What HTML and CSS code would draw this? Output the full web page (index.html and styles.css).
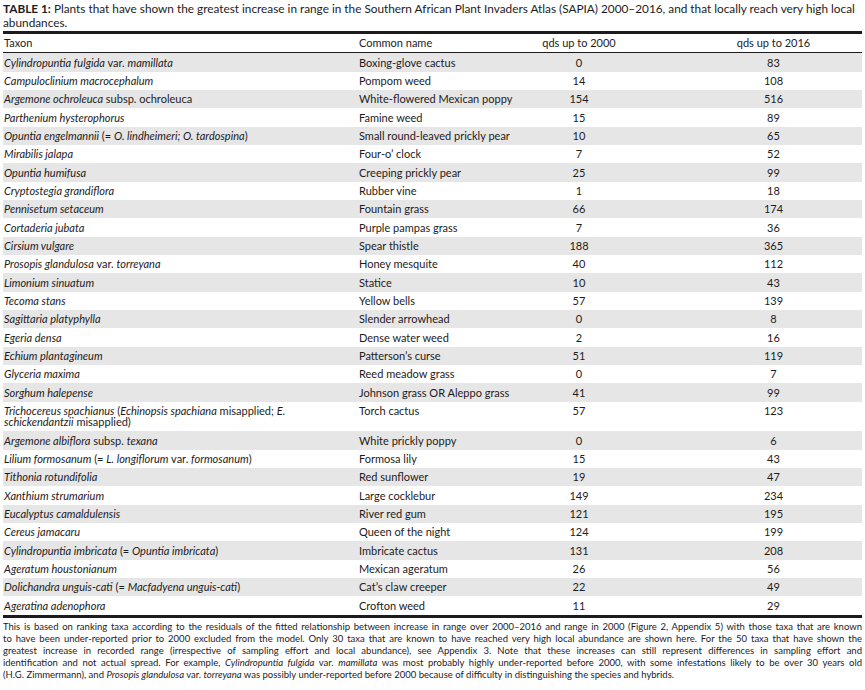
FILE: index.html
```html
<!DOCTYPE html>
<html>
<head>
<meta charset="utf-8">
<link rel="stylesheet" href="styles.css">
</head>
<body>
<div class="page">
  <div class="caption">
    <span class="cline"><b>TABLE 1:</b> Plants that have shown the greatest increase in range in the Southern African Plant Invaders Atlas (SAPIA) 2000–2016, and that locally reach very high local</span>
    <span class="cline">abundances.</span>
  </div>
  <div class="table">
    <div class="row head"><div class="c1">Taxon</div><div class="c2">Common name</div><div class="c3">qds up to 2000</div><div class="c4">qds up to 2016</div></div>
    <div class="row"><div class="c1"><i>Cylindropuntia fulgida</i> var. <i>mamillata</i></div><div class="c2">Boxing-glove cactus</div><div class="c3">0</div><div class="c4">83</div></div>
    <div class="row"><div class="c1"><i>Campuloclinium macrocephalum</i></div><div class="c2">Pompom weed</div><div class="c3">14</div><div class="c4">108</div></div>
    <div class="row"><div class="c1"><i>Argemone ochroleuca</i> subsp. ochroleuca</div><div class="c2">White-flowered Mexican poppy</div><div class="c3">154</div><div class="c4">516</div></div>
    <div class="row"><div class="c1"><i>Parthenium hysterophorus</i></div><div class="c2">Famine weed</div><div class="c3">15</div><div class="c4">89</div></div>
    <div class="row"><div class="c1"><i>Opuntia engelmannii</i> (= <i>O. lindheimeri; O. tardospina</i>)</div><div class="c2">Small round-leaved prickly pear</div><div class="c3">10</div><div class="c4">65</div></div>
    <div class="row"><div class="c1"><i>Mirabilis jalapa</i></div><div class="c2">Four-o’ clock</div><div class="c3">7</div><div class="c4">52</div></div>
    <div class="row"><div class="c1"><i>Opuntia humifusa</i></div><div class="c2">Creeping prickly pear</div><div class="c3">25</div><div class="c4">99</div></div>
    <div class="row"><div class="c1"><i>Cryptostegia grandiflora</i></div><div class="c2">Rubber vine</div><div class="c3">1</div><div class="c4">18</div></div>
    <div class="row"><div class="c1"><i>Pennisetum setaceum</i></div><div class="c2">Fountain grass</div><div class="c3">66</div><div class="c4">174</div></div>
    <div class="row"><div class="c1"><i>Cortaderia jubata</i></div><div class="c2">Purple pampas grass</div><div class="c3">7</div><div class="c4">36</div></div>
    <div class="row"><div class="c1"><i>Cirsium vulgare</i></div><div class="c2">Spear thistle</div><div class="c3">188</div><div class="c4">365</div></div>
    <div class="row"><div class="c1"><i>Prosopis glandulosa</i> var. <i>torreyana</i></div><div class="c2">Honey mesquite</div><div class="c3">40</div><div class="c4">112</div></div>
    <div class="row"><div class="c1"><i>Limonium sinuatum</i></div><div class="c2">Statice</div><div class="c3">10</div><div class="c4">43</div></div>
    <div class="row"><div class="c1"><i>Tecoma stans</i></div><div class="c2">Yellow bells</div><div class="c3">57</div><div class="c4">139</div></div>
    <div class="row"><div class="c1"><i>Sagittaria platyphylla</i></div><div class="c2">Slender arrowhead</div><div class="c3">0</div><div class="c4">8</div></div>
    <div class="row"><div class="c1"><i>Egeria densa</i></div><div class="c2">Dense water weed</div><div class="c3">2</div><div class="c4">16</div></div>
    <div class="row"><div class="c1"><i>Echium plantagineum</i></div><div class="c2">Patterson’s curse</div><div class="c3">51</div><div class="c4">119</div></div>
    <div class="row"><div class="c1"><i>Glyceria maxima</i></div><div class="c2">Reed meadow grass</div><div class="c3">0</div><div class="c4">7</div></div>
    <div class="row"><div class="c1"><i>Sorghum halepense</i></div><div class="c2">Johnson grass OR Aleppo grass</div><div class="c3">41</div><div class="c4">99</div></div>
    <div class="row"><div class="c1"><i>Trichocereus spachianus</i> (<i>Echinopsis spachiana</i> misapplied; <i>E.</i><br><i>schickendantzii</i> misapplied)</div><div class="c2">Torch cactus</div><div class="c3">57</div><div class="c4">123</div></div>
    <div class="row"><div class="c1"><i>Argemone albiflora</i> subsp. <i>texana</i></div><div class="c2">White prickly poppy</div><div class="c3">0</div><div class="c4">6</div></div>
    <div class="row"><div class="c1"><i>Lilium formosanum</i> (= <i>L. longiflorum</i> var. <i>formosanum</i>)</div><div class="c2">Formosa lily</div><div class="c3">15</div><div class="c4">43</div></div>
    <div class="row"><div class="c1"><i>Tithonia rotundifolia</i></div><div class="c2">Red sunflower</div><div class="c3">19</div><div class="c4">47</div></div>
    <div class="row"><div class="c1"><i>Xanthium strumarium</i></div><div class="c2">Large cocklebur</div><div class="c3">149</div><div class="c4">234</div></div>
    <div class="row"><div class="c1"><i>Eucalyptus camaldulensis</i></div><div class="c2">River red gum</div><div class="c3">121</div><div class="c4">195</div></div>
    <div class="row"><div class="c1"><i>Cereus jamacaru</i></div><div class="c2">Queen of the night</div><div class="c3">124</div><div class="c4">199</div></div>
    <div class="row"><div class="c1"><i>Cylindropuntia imbricata</i> (= <i>Opuntia imbricata</i>)</div><div class="c2">Imbricate cactus</div><div class="c3">131</div><div class="c4">208</div></div>
    <div class="row"><div class="c1"><i>Ageratum houstonianum</i></div><div class="c2">Mexican ageratum</div><div class="c3">26</div><div class="c4">56</div></div>
    <div class="row"><div class="c1"><i>Dolichandra unguis-cati</i> (= <i>Macfadyena unguis-cati</i>)</div><div class="c2">Cat’s claw creeper</div><div class="c3">22</div><div class="c4">49</div></div>
    <div class="row"><div class="c1"><i>Ageratina adenophora</i></div><div class="c2">Crofton weed</div><div class="c3">11</div><div class="c4">29</div></div>
  </div>
  <div class="note">
    <span class="nline">This is based on ranking taxa according to the residuals of the fitted relationship between increase in range over 2000–2016 and range in 2000 (Figure 2, Appendix 5) with those taxa that are known</span>
    <span class="nline">to have been under-reported prior to 2000 excluded from the model. Only 30 taxa that are known to have reached very high local abundance are shown here. For the 50 taxa that have shown the</span>
    <span class="nline">greatest increase in recorded range (irrespective of sampling effort and local abundance), see Appendix 3. Note that these increases can still represent differences in sampling effort and</span>
    <span class="nline">identification and not actual spread. For example, <i>Cylindropuntia fulgida</i> var. <i>mamillata</i> was most probably highly under-reported before 2000, with some infestations likely to be over 30 years old</span>
    <span class="nline last">(H.G. Zimmermann), and <i>Prosopis glandulosa</i> var. <i>torreyana</i> was possibly under-reported before 2000 because of difficulty in distinguishing the species and hybrids.</span>
  </div>
</div>
</body>
</html>
```
FILE: styles.css
```css
html, body {
  margin: 0;
  padding: 0;
  background: #ffffff;
}
body {
  font-family: "Lato", "Open Sans", sans-serif;
  color: #1e1b1c;
}
.page {
  width: 859px;
  padding: 2px 3px 0 3px;
}
.caption {
  font-size: 11.8px;
  line-height: 14px;
  padding-bottom: 1px;
}
.cline {
  display: block;
  white-space: nowrap;
}
.caption b {
  font-weight: 700;
}
.table {
  border-top: 3px solid #1e1b1c;
  border-bottom: 3px solid #1e1b1c;
  font-size: 11px;
}
.row {
  display: grid;
  grid-template-columns: 356px 132px 176px 1fr;
  line-height: 11.33px;
}
.row > div {
  padding: 3.5px 0;
  white-space: nowrap;
}
.row:nth-child(even) {
  background: #e6e6e6;
}
.head > div {
  padding: 2.5px 0 4.5px 0;
}
.head {
  border-bottom: 1px solid #1e1b1c;
}
.c1 {
  padding-left: 1px !important;
}
.c3 {
  text-align: center;
}
.c4 {
  text-align: center;
  padding-left: 18px !important;
}
.note {
  font-size: 9.5px;
  line-height: 12px;
  padding-top: 3px;
}
.nline {
  display: block;
  white-space: nowrap;
  text-align: justify;
  text-align-last: justify;
}
.nline.last {
  text-align-last: left;
}
```
